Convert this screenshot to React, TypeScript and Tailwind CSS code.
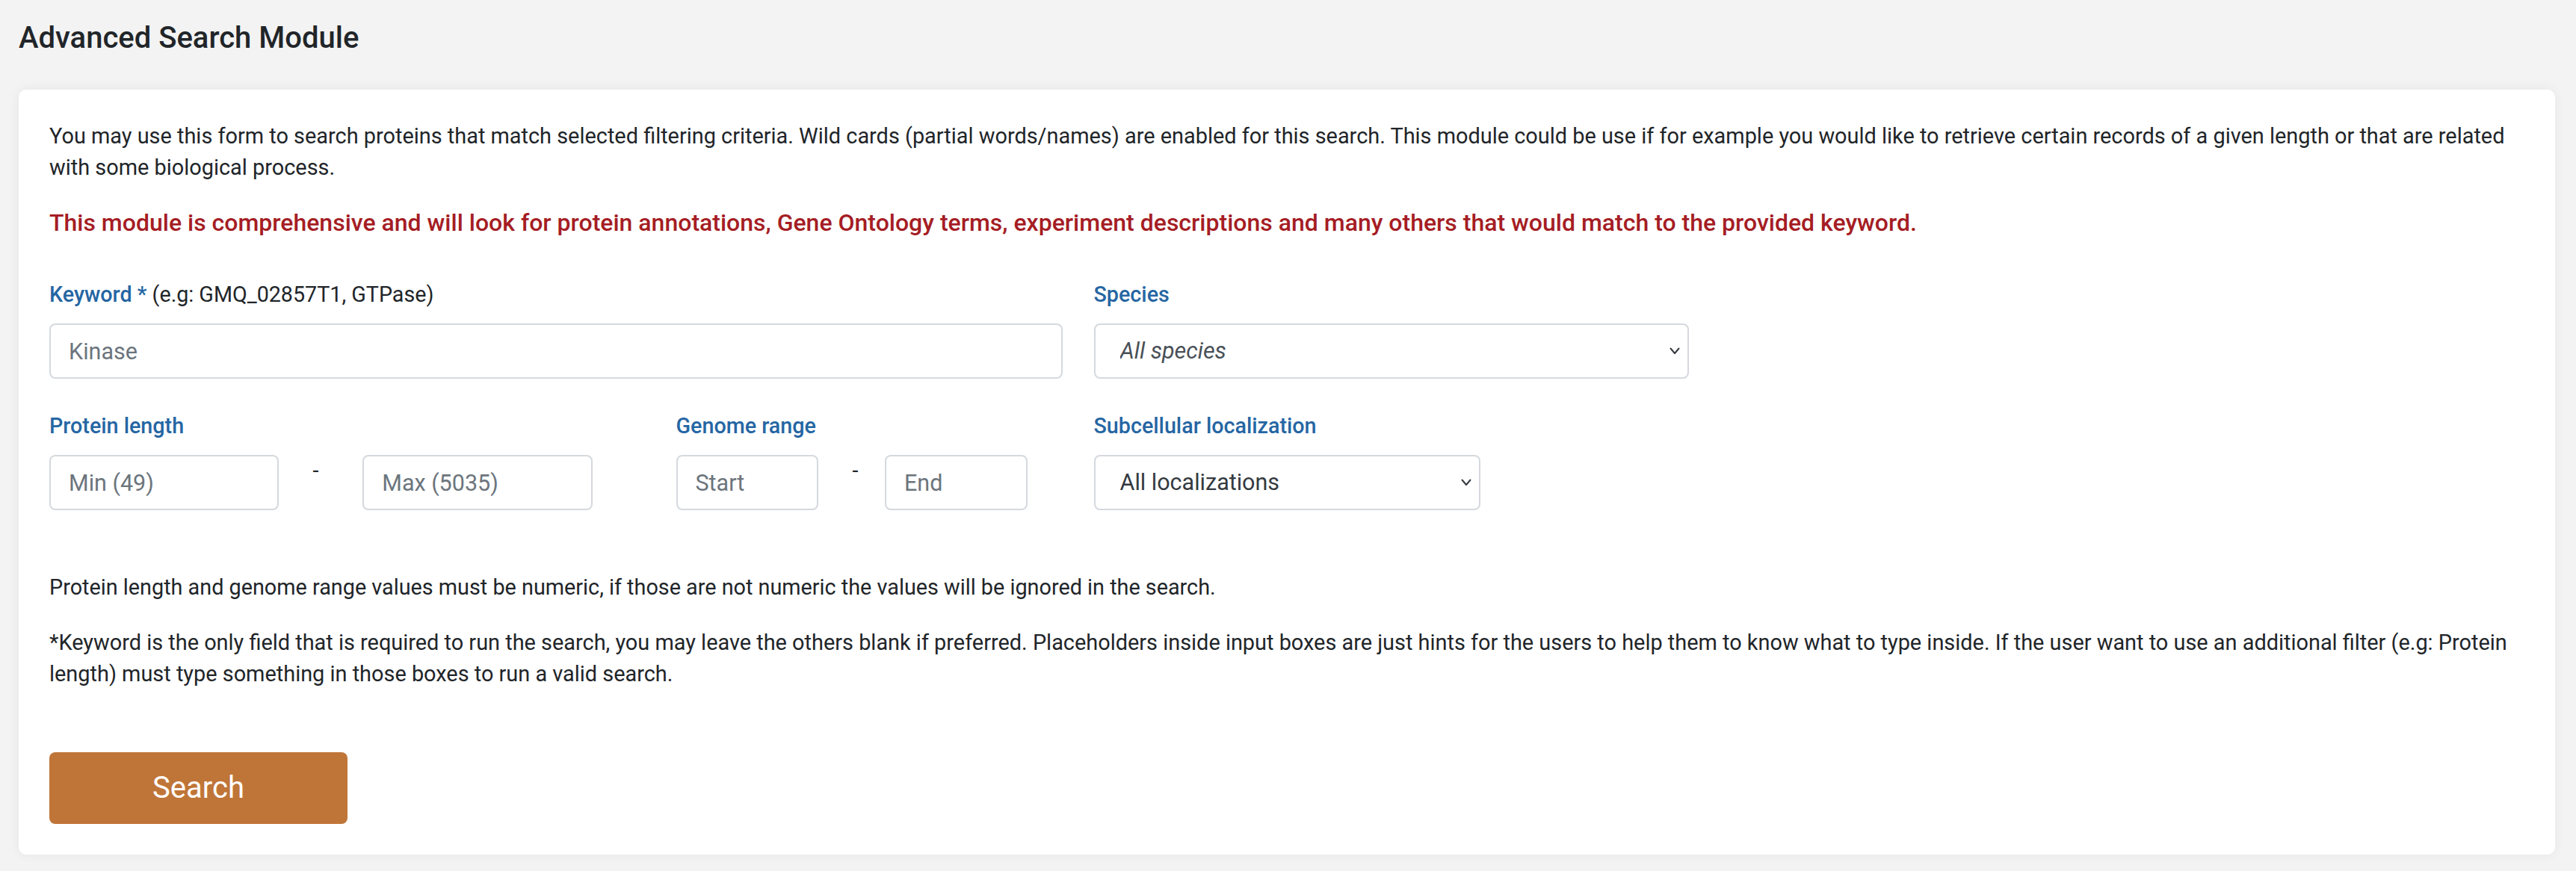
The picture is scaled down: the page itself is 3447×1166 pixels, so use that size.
const inputCls =
  "h-[74px] w-full rounded-[8px] border-2 border-[#d5d9de] bg-white pl-[24px] text-[30.5px] text-[#212529] outline-none placeholder:text-[#6c757d]";

function Chevron() {
  return (
    <svg
      className="pointer-events-none absolute right-[12px] top-1/2 -translate-y-1/2"
      width="14"
      height="10"
      viewBox="0 0 14 10"
      fill="none"
    >
      <polyline
        points="1.5,1.5 7,8 12.5,1.5"
        stroke="#343a40"
        strokeWidth="2"
        strokeLinecap="round"
        strokeLinejoin="round"
      />
    </svg>
  );
}

function Label({ children }: { children: React.ReactNode }) {
  return (
    <div className="mb-[18px] text-[28.7px] font-medium leading-[42px] text-[#2566a3]">
      {children}
    </div>
  );
}

export default function App() {
  return (
    <div className="min-h-screen bg-[#f3f3f3] pb-[23px] pl-[25px] pr-[28px] pt-[26px] font-['Roboto',sans-serif] text-[#212529]">
      <h1 className="text-[40px] font-medium leading-[49px]">
        Advanced Search Module
      </h1>

      <div className="mt-[45px] rounded-[10px] bg-white px-[41px] pb-[41px] pt-[41px] shadow-[0_0_16px_rgba(0,0,0,0.06)]">
        {/* Intro */}
        <p className="text-[28.9px] leading-[42px]">
          You may use this form to search proteins that match selected
          filtering criteria. Wild cards (partial words/names) are enabled for
          this search. This module could be use if for example you would like
          to retrieve certain records of a given length or that are related
          with some biological process.
        </p>
        <p className="mt-[32px] text-[32px] font-medium leading-[42px] text-[#a51d24]">
          This module is comprehensive and will look for protein annotations,
          Gene Ontology terms, experiment descriptions and many others that
          would match to the provided keyword.
        </p>

        {/* Form */}
        <div className="mt-[54px] grid grid-cols-12 gap-x-[42px] gap-y-[42px]">
          <div className="col-span-5">
            <Label>
              Keyword *{" "}
              <span className="font-normal text-[#212529]">
                (e.g: GMQ_02857T1, GTPase)
              </span>
            </Label>
            <input className={inputCls} placeholder="Kinase" />
          </div>
          <div className="col-span-3">
            <Label>Species</Label>
            <div className="relative">
              <select className="h-[74px] w-full appearance-none rounded-[8px] border-2 border-[#d5d9de] bg-white pl-[33px] text-[30.5px] italic text-[#495057] outline-none">
                <option>All species</option>
              </select>
              <Chevron />
            </div>
          </div>

          <div className="col-span-3 col-start-1">
            <Label>Protein length</Label>
            <div className="grid grid-cols-12 gap-x-[42px]">
              <input className={`${inputCls} col-span-5`} placeholder="Min (49)" />
              <div className="col-span-1 pl-[3px] text-[28.8px] leading-[42px]">-</div>
              <input className={`${inputCls} col-span-5`} placeholder="Max (5035)" />
            </div>
          </div>
          <div className="col-span-2">
            <Label>Genome range</Label>
            <div className="grid grid-cols-12 gap-x-[42px]">
              <input className={`${inputCls} col-span-5`} placeholder="Start" />
              <div className="col-span-1 pl-[3px] text-[28.8px] leading-[42px]">-</div>
              <input className={`${inputCls} col-span-5`} placeholder="End" />
            </div>
          </div>
          <div className="col-span-2">
            <Label>Subcellular localization</Label>
            <div className="relative">
              <select className="h-[74px] w-full appearance-none rounded-[8px] border-2 border-[#d5d9de] bg-white pl-[33px] text-[30.5px] text-[#343a40] outline-none">
                <option>All localizations</option>
              </select>
              <Chevron />
            </div>
          </div>
        </div>

        {/* Notes */}
        <p className="mt-[82px] text-[28.8px] leading-[42px]">
          Protein length and genome range values must be numeric, if those are
          not numeric the values will be ignored in the search.
        </p>
        <p className="mt-[32px] text-[28.9px] leading-[42px]">
          *Keyword is the only field that is required to run the search, you
          may leave the others blank if preferred. Placeholders inside input
          boxes are just hints for the users to help them to know what to type
          inside. If the user want to use an additional filter (e.g: Protein
          length) must type something in those boxes to run a valid search.
        </p>

        <button className="mt-[84px] flex h-[96px] w-[399px] items-center justify-center rounded-[8px] bg-[#c07538] text-[40px] text-white">
          Search
        </button>
      </div>
    </div>
  );
}
